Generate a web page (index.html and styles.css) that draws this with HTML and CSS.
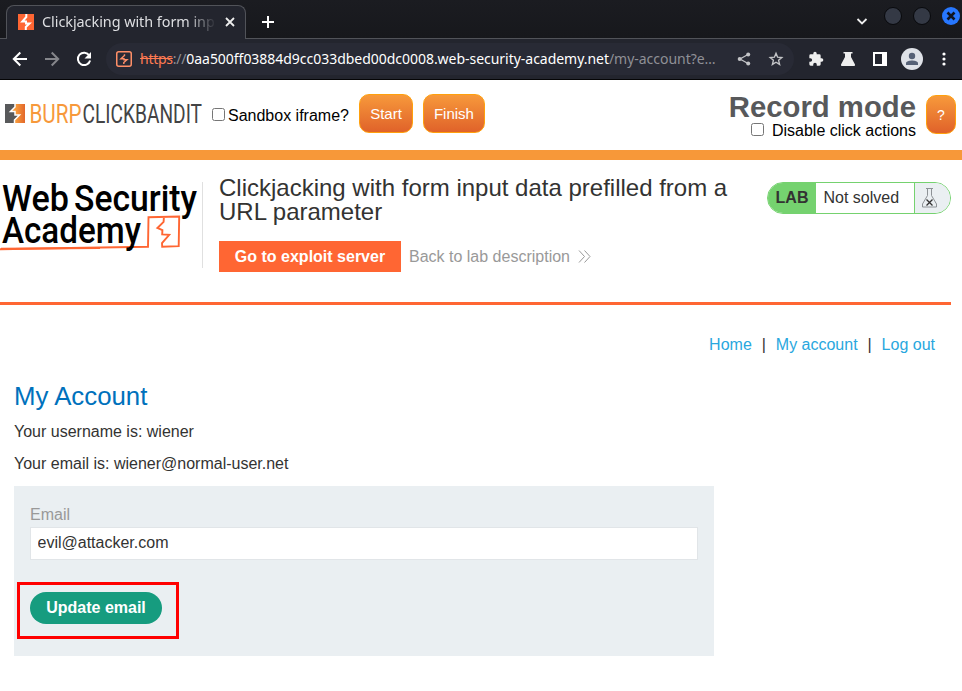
FILE: index.html
```html
<!DOCTYPE html>
<html lang="en">
<head>
<meta charset="utf-8">
<title>Clickjacking with form input data prefilled from a URL parameter</title>
<link rel="stylesheet" href="styles.css">
</head>
<body>
<header class="browser">
  <div class="tabstrip">
    <div class="tab">
      <svg width="16" height="16" viewBox="0 0 16 16"><path fill="#ff6633" d="M0 0h16v16H0z"/><path d="M8.300 0V3L4.300 7.500H8V9.500H11.500L7.800 13V16" fill="none" stroke="#fff" stroke-width="2"/></svg>
      <span class="tab-title">Clickjacking with form inp</span>
      <svg class="tab-close" width="16" height="16" viewBox="0 0 16 16"><path d="M4 4l8 8M12 4l-8 8" stroke="#eee" stroke-width="1.800"/></svg>
    </div>
    <svg class="new-tab" width="16" height="16" viewBox="0 0 16 16"><path d="M8 2v12M2 8h12" stroke="#fff" stroke-width="2"/></svg>
    <svg class="chevron" width="12" height="12" viewBox="0 0 12 12"><path d="M1.500 4L6 8.500 10.500 4" fill="none" stroke="#eee" stroke-width="1.800"/></svg>
    <div class="window-controls">
      <i class="dot"></i><i class="dot"></i>
      <svg width="18" height="18" viewBox="0 0 18 18"><circle cx="9" cy="9" r="9" fill="#2777ff"/><path d="M5.500 5.500l7 7M12.500 5.500l-7 7" stroke="#101421" stroke-width="2.600"/></svg>
    </div>
  </div>
  <div class="toolbar">
    <span class="cell"><svg width="16" height="16" viewBox="0 0 16 16"><path d="M15 8H2M8.300 1.500L1.800 8l6.500 6.500" fill="none" stroke="#fff" stroke-width="2"/></svg></span>
    <span class="cell"><svg width="16" height="16" viewBox="0 0 16 16"><path d="M1 8h13M7.700 1.500L14.200 8l-6.500 6.500" fill="none" stroke="#85868b" stroke-width="2"/></svg></span>
    <span class="cell"><svg width="16" height="16" viewBox="0 0 16 16"><path d="M13.300 4.500A6.200 6.200 0 1 0 14.100 9.400" fill="none" stroke="#fff" stroke-width="2"/><path d="M15 1v6.500H8.500z" fill="#fff"/></svg></span>
    <div class="omnibox">
      <svg width="16" height="16" viewBox="0 0 16 16"><rect x=".75" y=".75" width="14.500" height="14.500" rx="2" fill="none" stroke="#ff8f68" stroke-width="1.500"/><path d="M8.500 3.200V4.500L5 7.700H8V8.700H11L7.800 11.500V13" fill="none" stroke="#ff8f68" stroke-width="1.400"/></svg>
      <span class="url"><s>https</s><span class="dim slashes">://</span>0aa500ff03884d9cc033dbed00dc0008.web-security-academy.net<span class="dim">/my-account?e…</span></span>
      <span class="cell"><svg width="14" height="14" viewBox="0 0 14 14"><path d="M11 2.500L3 7l8 4.500" fill="none" stroke="#c3c4c7" stroke-width="1.300"/><g fill="#c3c4c7"><circle cx="11.200" cy="2.400" r="2"/><circle cx="2.700" cy="7" r="2"/><circle cx="11.200" cy="11.600" r="2"/></g></svg></span>
      <span class="cell"><svg width="16" height="16" viewBox="0 0 16 16"><path d="M8 2.300l1.600 3.900 4.200.4-3.200 2.700 1 4.100L8 11.200l-3.600 2.200 1-4.100-3.200-2.700 4.200-.4z" fill="none" stroke="#c3c4c7" stroke-width="1.400"/></svg></span>
    </div>
    <span class="cell"><svg width="16" height="16" viewBox="0 0 24 24"><path fill="#eee" d="M20.500 11H19V7a2 2 0 0 0-2-2h-4V3.500a2.500 2.500 0 0 0-5 0V5H4a2 2 0 0 0-2 2v3.800h1.500a2.700 2.700 0 0 1 0 5.400H2V20a2 2 0 0 0 2 2h3.800v-1.500a2.700 2.700 0 0 1 5.400 0V22H17a2 2 0 0 0 2-2v-4h1.500a2.500 2.500 0 0 0 0-5z"/></svg></span>
    <span class="cell"><svg width="16" height="16" viewBox="0 0 16 16"><path fill="#eee" d="M3.500 1h9v1.500H11V6l4 7.500q.4 1.500-1 1.500H2q-1.400 0-1-1.500L5 6V2.500H3.500z"/></svg></span>
    <span class="cell"><svg width="14" height="14" viewBox="0 0 14 14"><path fill="#fff" fill-rule="evenodd" d="M0 0h14v14H0zM2 2v10h7V2z"/></svg></span>
    <span class="cell"><svg width="22" height="22" viewBox="0 0 22 22"><circle cx="11" cy="11" r="11" fill="#dfe2e8"/><g fill="#566176"><circle cx="11" cy="8" r="3.200"/><path d="M5 17v-1.700C5 13.300 8.500 12.500 11 12.500s6 .8 6 2.800V17z"/></g></svg></span>
    <span class="cell"><svg width="4" height="14" viewBox="0 0 4 14"><g fill="#fff"><circle cx="2" cy="2" r="1.600"/><circle cx="2" cy="7" r="1.600"/><circle cx="2" cy="12" r="1.600"/></g></svg></span>
  </div>
</header>

<section class="bandit">
  <svg class="bandit-logo" width="198" height="30" viewBox="0 0 198 30">
    <defs><linearGradient id="flame"><stop offset=".4" stop-color="#f7993b"/><stop offset="1" stop-color="#e2672b"/></linearGradient></defs>
    <path fill="#58595b" d="M0 1h10v3L5.500 8.500H10V12h4.500L9 17v3H0z"/><path fill="url(#flame)" d="M10 1h10v19H9v-3l5.500-5H10V8.500H5.500L10 4z"/>
    <path d="M10 0V4L5.500 8.500H10V12h4.500L9.500 17v4" fill="none" stroke="#fff" stroke-width="1.500"/>
    <text class="bandit-word" x="24.500" y="20" textLength="52" lengthAdjust="spacingAndGlyphs" fill="#f7993b">BURP</text>
    <text class="bandit-word" x="77.500" y="20" textLength="119.500" lengthAdjust="spacingAndGlyphs" fill="#434345">CLICKBANDIT</text>
  </svg>
  <label class="sandbox"><input type="checkbox">Sandbox iframe?</label>
  <button class="orange start">Start</button>
  <button class="orange finish">Finish</button>
  <div class="mode">
    <h1>Record mode</h1>
    <label><input type="checkbox">Disable click actions</label>
  </div>
  <button class="orange help">?</button>
</section>

<main class="page">
  <section class="lab">
    <div class="academy">
      <svg width="202" height="86" viewBox="0 0 202 86">
        <text class="academy-word" x="2" y="28.700" textLength="67" lengthAdjust="spacingAndGlyphs">Web</text>
        <text class="academy-word" x="74" y="28.700" textLength="123" lengthAdjust="spacingAndGlyphs">Security</text>
        <path d="M0 67.300L70 66l78-1.200.500-29.500 30.700-.8-.5 29.600-16.500.6-.2-3.500 7.200-8.400-7-.4.200-4.300-5-2.100 6.200-6.200.3-4.500" fill="none" stroke="#ff6633" stroke-width="1.900"/>
        <path d="M1 66.800L100 66" stroke="#ff6633" stroke-width="2"/>
        <text class="academy-word" x="2" y="61" textLength="139" lengthAdjust="spacingAndGlyphs">Academy</text>
      </svg>
    </div>
    <div class="lab-title">
      <h2>Clickjacking with form input data prefilled from a URL parameter</h2>
      <div class="lab-links">
        <a class="exploit">Go to exploit server</a>
        <a class="back">Back to lab description</a>
        <svg width="13" height="13" viewBox="0 0 13 13"><path d="M1 .5l5.500 6-5.500 6M6.500 .5l5.500 6-5.500 6" fill="none" stroke="#999" stroke-width="1"/></svg>
      </div>
    </div>
    <div class="status">
      <b>LAB</b><span>Not solved</span>
      <i><svg width="18" height="22" viewBox="0 0 18 22"><path d="M5 1.500h7M6.500 1.500v7L1.500 17v3h14v-3L10.500 8.500v-7" fill="none" stroke="#8d9296"/><path d="M5.500 12.500l6 6M11.500 12.500l-6 6" stroke="#333" stroke-width="1.300"/></svg></i>
    </div>
  </section>
  <nav><a>Home</a><span>|</span><a>My account</a><span>|</span><a>Log out</a></nav>
  <section class="account">
    <h2>My Account</h2>
    <p>Your username is: wiener</p>
    <p>Your email is: wiener@normal-user.net</p>
    <form>
      <label for="email">Email</label>
      <input id="email" type="text" value="evil@attacker.com">
      <button class="update" type="button">Update email</button>
      <div class="highlight"></div>
    </form>
  </section>
</main>
</body>
</html>
```
FILE: styles.css
```css
* { box-sizing: border-box; }
body { margin: 0; height: 691px; overflow: hidden; background: #fff; color: #333332; font: 16px/20px "Liberation Sans", Arial, sans-serif; }
svg { display: block; flex: none; }
h1, h2, p { margin: 0; }

.browser { height: 80px; background: #23252e; border-bottom: 1px solid #050506; font-family: "Noto Sans", sans-serif; }
.tabstrip { display: flex; align-items: flex-start; height: 39px; padding: 5px 0 0 6px; background: linear-gradient(#1b1c21, #17181c); border-bottom: 1px solid #515359; }
.tab { display: flex; align-items: center; width: 240px; height: 34px; padding: 0 7px 0 11px; background: #23252e; border: 1px solid #515359; border-bottom: 0; border-radius: 8px 8px 0 0; }
.tab svg { margin-top: -1px; }
.tab-title { width: 177px; margin-left: 8px; white-space: nowrap; font-size: 14.400px; letter-spacing: -.04px; line-height: 20px; margin-top: -2px; color: #dedfe2; -webkit-mask-image: linear-gradient(90deg, #000 82%, transparent 99%); mask-image: linear-gradient(90deg, #000 82%, transparent 99%); }
.tab-close { margin-left: 4px; }
.new-tab { margin: 9px 0 0 14px; }
.chevron { margin: 10px 0 0 auto; }
.window-controls { display: flex; gap: 11px; margin: 2px 2px 0 16px; }
.dot { width: 18px; height: 18px; border: 1px solid #08090c; border-radius: 50%; background: #343945; }
.toolbar { display: flex; align-items: center; height: 40px; padding-left: 4px; }
.cell { display: flex; flex: none; align-items: center; justify-content: center; width: 32px; height: 32px; }
.omnibox { display: flex; align-items: center; width: 688px; height: 32px; margin: 0 6px; padding: 0 2px 0 10px; border-radius: 16px; background: #282a35; }
.url { width: 588px; margin-left: 8px; margin-right: auto; font-size: 14px; letter-spacing: -.03px; line-height: 20px; white-space: nowrap; color: #fff; }
.url s { color: #ff7b52; letter-spacing: -.25px; }
.dim { color: #8f9096; }
.slashes { letter-spacing: -.25px; }

.bandit { display: flex; align-items: flex-start; height: 80px; padding: 14px 6px 0 5px; border-bottom: 10px solid #f79839; color: #000; }
.bandit-logo { margin-top: 9px; }
.bandit-word { font: 400 26px Roboto, sans-serif; }
.bandit label { display: flex; line-height: 18px; white-space: nowrap; }
.bandit input { width: 13px; height: 13px; margin: 0 3px 0 0; }
.sandbox { margin: 13px 0 0 9px; align-items: flex-start; }
.bandit .sandbox input { margin-top: 1px; }
.orange { height: 39px; padding: 0; border: 1px solid #ffa00c; border-radius: 10px; background: linear-gradient(#f7993b, #e0622a); color: #fff; font: 15px "Liberation Sans", Arial, sans-serif; }
.start { width: 54px; margin-left: 10px; }
.finish { width: 62px; margin-left: 10px; }
.mode { margin-left: auto; }
.mode h1 { margin-top: -2px; font-size: 29.300px; line-height: 30px; color: #58595b; }
.mode label { justify-content: flex-end; }
.mode input { margin: 1px 8px 0 0; }
.help { width: 30px; margin: 1px 0 0 10px; font-size: 14px; }

.lab { display: flex; align-items: flex-start; width: 951px; height: 145px; padding-top: 22px; border-bottom: 3px solid #ff6633; }
.academy { width: 203px; height: 86px; border-right: 1px solid #e0e0e0; }
.academy-word { font: 500 37.500px Roboto, sans-serif; fill: #000; }
.lab-title { width: 532px; margin-left: 16px; margin-top: -6px; }
.lab-title h2 { font-size: 24px; line-height: 24px; font-weight: 400; }
.lab-links { display: flex; align-items: center; margin-top: 17px; color: #999; }
.exploit { height: 31px; width: 182px; margin-right: 8px; line-height: 31px; text-align: center; font-weight: 700; color: #fff; background: #ff6633; }
.back { margin-right: 8px; }
.status { display: flex; width: 184px; height: 32px; margin-left: auto; line-height: 30px; border: 1px solid #75d26f; border-radius: 16px; overflow: hidden; }
.status b { width: 48px; background: #75d26f; text-align: center; }
.status span { width: 99px; padding-left: 7.500px; border-right: 1px solid #75d26f; }
.status i { flex: 1; padding: 4px 0 0 6px; background: #eaeff2; }
nav { display: flex; justify-content: flex-end; gap: 10px; margin: 30px 27px 0 0; color: #000; }
nav a { color: #29a7de; }
nav span { width: 4px; text-align: center; color: #333332; }
.account { width: 700px; margin: 25px 0 0 14px; }
.account h2 { margin-bottom: 10px; font-size: 25.800px; line-height: 32px; font-weight: 400; color: #0071bc; }
.account p { height: 32px; line-height: 20px; }
form { position: relative; height: 170px; padding: 19px 16px; background: #eaeff2; }
form label { display: block; height: 22px; line-height: 20px; color: #999; }
#email { display: block; width: 100%; height: 33px; padding: 0 6.500px 2px; border: 1px solid #e1e5e8; background: #fff; color: #333332; font: inherit; }
.update { display: block; width: 132px; height: 32px; margin-top: 32px; padding: 0; border: 0; border-radius: 16px; background: #169c7f; color: #fff; font: 700 16px "Liberation Sans", Arial, sans-serif; }
.highlight { position: absolute; left: 3px; top: 96px; width: 162px; height: 57px; border: 3px solid #f00; }
```
